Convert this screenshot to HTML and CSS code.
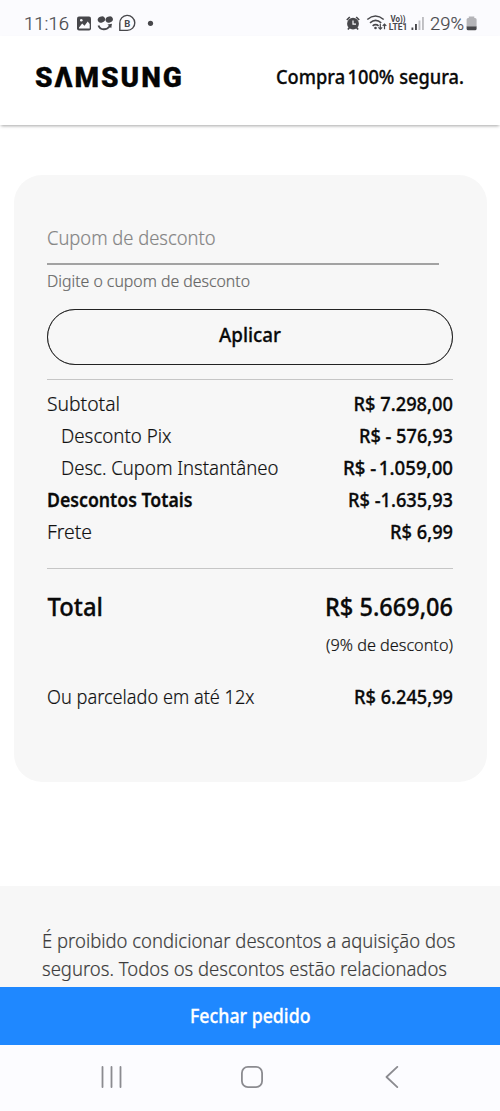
FILE: index.html
```html
<!DOCTYPE html>
<html lang="pt-BR">
<head>
<meta charset="utf-8">
<meta name="viewport" content="width=device-width">
<title>Samsung - Compra 100% segura</title>
<link rel="stylesheet" href="styles.css">
</head>
<body>
<div class="status">
  <svg class="status-icons" width="500" height="37" viewBox="0 0 500 37">
    <text class="sys" x="24" y="30" textLength="45" lengthAdjust="spacingAndGlyphs">11:16</text>
    <rect x="77" y="16.5" width="14" height="14" rx="2" fill="#47474b"/>
    <path d="M79 27.500l3.200-4 2.300 2.200 3.200-4.200 2 2.500v4.500h-10.700z" fill="#fbfbfe"/>
    <circle cx="81.300" cy="20.200" r="1.300" fill="#fbfbfe"/>
    <g fill="#47474b"><ellipse cx="101.400" cy="19.500" rx="3.800" ry="3" transform="rotate(-25 101.400 19.500)"/><ellipse cx="109.200" cy="19.500" rx="3.800" ry="3" transform="rotate(-25 109.200 19.500)"/><path d="M107.500 24.500l4.500-.700-.800 4.400z"/></g>
    <path d="M98.500 25.500c1.500 4.800 8 5.200 11.500.500" fill="none" stroke="#47474b" stroke-width="1.900"/>
    <path d="M119.800 30.400v-7a7.500 7.500 0 1 1 7.500 7z" fill="none" stroke="#47474b" stroke-width="1.400" stroke-linejoin="round"/>
    <text class="badge-b" x="127.300" y="26.800" text-anchor="middle">B</text>
    <circle cx="150.500" cy="23.300" r="2.600" fill="#47474b"/>
    <g fill="none" stroke="#47474b">
      <circle cx="353" cy="23.700" r="5.900" fill="#47474b" stroke="none"/>
      <path d="M346.800 20l3-3M359.200 20l-3-3M349.500 27.500l-1.600 2M356.500 27.500l1.600 2" stroke-width="1.700"/>
      <path d="M353 20.500v3.700h3" stroke="#fbfbfe" stroke-width="1.200"/>
      <path d="M367.300 19.500q8.200-7 16.400 0M370 22.800q5.600-4.800 11.200 0M372.600 25.800q3-2.400 6 0" stroke-width="1.600"/>
      <path d="M380.300 23.800v5.400M378.400 27.300l1.900 1.900 1.900-1.900M384.500 29.300v-5.300M382.700 25.900l1.800-1.900 1.800 1.900" stroke-width="1.200"/>
    </g>
    <circle cx="375.500" cy="28" r="1.300" fill="#47474b"/>
    <text class="net" x="390.500" y="22.300" textLength="15" lengthAdjust="spacingAndGlyphs">Vo))</text>
    <text class="net" x="388.800" y="30.300" textLength="18.500" lengthAdjust="spacingAndGlyphs">LTE1</text>
    <g fill="#47474b"><rect x="411.500" y="27.500" width="1.800" height="2.500"/><rect x="415" y="24" width="1.900" height="6"/></g>
    <g fill="#bebec2"><rect x="418.500" y="20.500" width="1.900" height="9.500"/><rect x="422" y="17" width="1.900" height="13"/></g>
    <text class="sys" x="430" y="30" textLength="34" lengthAdjust="spacingAndGlyphs">29%</text>
    <path d="M468.800 16.500h5.500v1.500h.700q1.600 0 1.600 1.600v7.400h-10v-7.400q0-1.600 1.600-1.600h.600z" fill="#b4b4b8"/>
    <path d="M466.600 26.500h10v2.200q0 1.600-1.600 1.600h-6.800q-1.600 0-1.600-1.600z" fill="#47474b"/>
  </svg>
</div>

<header class="header">
  <div class="logo" aria-label="Samsung">SΛMSUNG</div>
  <svg class="fit" width="188" height="28"><text class="strong" x="0" y="21" textLength="188" lengthAdjust="spacingAndGlyphs">Compra<tspan class="tight"> </tspan>100% segura.</text></svg>
</header>

<main class="main">
  <section class="card">
    <div class="field">
      <svg class="fit muted" width="168" height="28"><text x="0" y="21" textLength="168.500" lengthAdjust="spacingAndGlyphs">Cupom de desconto</text></svg>
    </div>
    <div class="hint"><svg class="fit" width="203" height="28"><text class="small" x="0" y="21" textLength="203" lengthAdjust="spacingAndGlyphs">Digite o cupom de desconto</text></svg></div>
    <div class="apply"><svg class="fit" width="62" height="28"><text class="strong" x="0" y="21" textLength="62" lengthAdjust="spacingAndGlyphs">Aplicar</text></svg></div>

    <div class="rows">
      <div class="row">
        <svg class="fit" width="72" height="28"><text x="0" y="21" textLength="73" lengthAdjust="spacingAndGlyphs">Subtotal</text></svg>
        <svg class="fit" width="100" height="28"><text class="strong" x="0.500" y="21" textLength="99.500" lengthAdjust="spacingAndGlyphs">R$ 7.298,00</text></svg>
      </div>
      <div class="row sub">
        <svg class="fit" width="110" height="28"><text x="0" y="21" textLength="110.500" lengthAdjust="spacingAndGlyphs">Desconto Pix</text></svg>
        <svg class="fit" width="94" height="28"><text class="strong" x="0" y="21" textLength="94" lengthAdjust="spacingAndGlyphs">R$ - 576,93</text></svg>
      </div>
      <div class="row sub">
        <svg class="fit" width="217" height="28"><text x="0" y="21" textLength="217.500" lengthAdjust="spacingAndGlyphs">Desc. Cupom Instantâneo</text></svg>
        <svg class="fit" width="110" height="28"><text class="strong" x="0" y="21" textLength="110" lengthAdjust="spacingAndGlyphs">R$ -<tspan class="tight"> </tspan>1.059,00</text></svg>
      </div>
      <div class="row">
        <svg class="fit" width="145" height="28"><text class="strong bold" x="0" y="21" textLength="145.500" lengthAdjust="spacingAndGlyphs">Descontos Totais</text></svg>
        <svg class="fit" width="105" height="28"><text class="strong" x="0" y="21" textLength="105" lengthAdjust="spacingAndGlyphs">R$ -1.635,93</text></svg>
      </div>
      <div class="row">
        <svg class="fit" width="45" height="28"><text x="0" y="21" textLength="45" lengthAdjust="spacingAndGlyphs">Frete</text></svg>
        <svg class="fit" width="63" height="28"><text class="strong" x="0" y="21" textLength="63" lengthAdjust="spacingAndGlyphs">R$ 6,99</text></svg>
      </div>
    </div>

    <div class="total">
      <svg class="fit" width="55" height="28"><text class="strong large" x="0.500" y="21" textLength="55.500" lengthAdjust="spacingAndGlyphs">Total</text></svg>
      <svg class="fit" width="128" height="28"><text class="strong large" x="0" y="21" textLength="128" lengthAdjust="spacingAndGlyphs">R$ 5.669,06</text></svg>
    </div>
    <div class="percent"><svg class="fit" width="127" height="28"><text class="small" x="0" y="20" textLength="127" lengthAdjust="spacingAndGlyphs">(9% de desconto)</text></svg></div>
    <div class="row">
      <svg class="fit" width="207" height="28"><text x="0" y="21" textLength="207.500" lengthAdjust="spacingAndGlyphs">Ou parcelado em até 12x</text></svg>
      <svg class="fit" width="99" height="28"><text class="strong" x="0" y="21" textLength="99" lengthAdjust="spacingAndGlyphs">R$ 6.245,99</text></svg>
    </div>
  </section>
</main>

<section class="notice">
  <svg class="fit" width="414" height="28"><text x="0" y="21" textLength="413.500" lengthAdjust="spacingAndGlyphs">É proibido condicionar descontos a aquisição dos</text></svg>
  <svg class="fit" width="405" height="28"><text x="0" y="21" textLength="405" lengthAdjust="spacingAndGlyphs">seguros. Todos os descontos estão relacionados</text></svg>
</section>

<div class="checkout"><svg class="fit" width="120" height="28"><text class="strong" x="0" y="21.500" textLength="120.500" lengthAdjust="spacingAndGlyphs">Fechar pedido</text></svg></div>

<nav class="nav">
  <svg width="22" height="22" viewBox="0 0 22 22"><path d="M1.500.900v20.200M10.500.900v20.200M19.500.900v20.200"/></svg>
  <svg width="22" height="22" viewBox="0 0 22 22"><rect x=".900" y=".900" width="20.200" height="20.200" rx="6"/></svg>
  <svg width="14" height="22" viewBox="0 0 14 22"><path d="M12.300.900L1.500 11l10.800 10.100"/></svg>
</nav>
</body>
</html>
```
FILE: styles.css
```css
* { box-sizing: border-box; }

body {
  margin: 0;
  height: 1111px;
  overflow: hidden;
  display: flex;
  flex-direction: column;
  background: #fff;
  color: #111;
  font: 300 20px "Noto Sans", sans-serif;
}

svg { display: block; flex: none; }

.fit { overflow: visible; fill: currentColor; stroke: currentColor; stroke-width: .2px; }
.fit .strong { font-weight: 500; color: #0a0a0a; fill: #0a0a0a; stroke: #0a0a0a; stroke-width: .3px; }
.fit .bold { font-weight: 600; }
.fit .large { font-size: 24.500px; }
.fit .small { font-size: 16.500px; }
.fit .tight { word-spacing: -2.500px; }

.status { height: 36px; background: #fbfbfe; }
.sys { font: 300 19px Roboto, sans-serif; fill: #47474b; stroke: #47474b; stroke-width: .2px; }
.net { font: 700 8.500px Roboto, sans-serif; fill: #47474b; }
.badge-b { font: 700 9.500px Roboto, sans-serif; fill: #47474b; }

.header {
  height: 89px;
  padding: 0 36px 7px 35px;
  display: flex;
  align-items: center;
  justify-content: space-between;
  background: #fff;
  box-shadow: 0 2px 3px -1px rgba(0, 0, 0, .35);
}
.logo {
  margin-top: 2px;
  font: 900 28px/28px Roboto, sans-serif;
  letter-spacing: 2px;
  color: #050505;
  -webkit-text-stroke: .3px #050505;
}

.main { height: 761px; padding: 49.500px 13px 0 14px; }
.card {
  height: 607.500px;
  padding: 49px 34px 0 33px;
  border-radius: 28px;
  background: #f7f7f7;
}
.field { width: 392px; height: 41px; padding-top: .5px; border-bottom: 2px solid #a2a2a2; }
.muted { color: #858585; }
.hint { height: 44px; padding-top: 1.500px; color: #666; }
.apply {
  height: 56px;
  margin-bottom: 14px;
  border: 1.500px solid #222;
  outline: .5px solid rgba(34, 34, 34, .5);
  outline-offset: -1.500px;
  border-radius: 28px;
  display: flex;
  justify-content: center;
  padding-top: 11px;
}
.rows {
  height: 190px;
  padding-top: 10.500px;
  border: solid #c6c6c6;
  border-width: 1px 0;
}
.row { height: 32px; display: flex; justify-content: space-between; }
.sub { padding-left: 14px; }
.total { height: 36px; margin-top: 26.500px; display: flex; justify-content: space-between; }
.percent { height: 52px; display: flex; justify-content: flex-end; }

.notice { height: 101px; padding: 41px 42px 0; background: #f7f7f7; color: #3c3c3c; overflow: hidden; }
.checkout {
  height: 57.500px;
  padding-top: 14px;
  display: flex;
  justify-content: center;
  background: #1f88ff;
}
.checkout .strong { fill: #fff; stroke: #fff; }
.nav {
  flex: 1;
  display: flex;
  gap: 117.500px;
  padding: 21.500px 0 0 101px;
  background: #fcfcff;
}
.nav svg:last-child { margin-left: 5px; }
.nav svg { fill: none; stroke: #8b8b90; stroke-width: 1.800; stroke-linecap: round; stroke-linejoin: round; }
```
